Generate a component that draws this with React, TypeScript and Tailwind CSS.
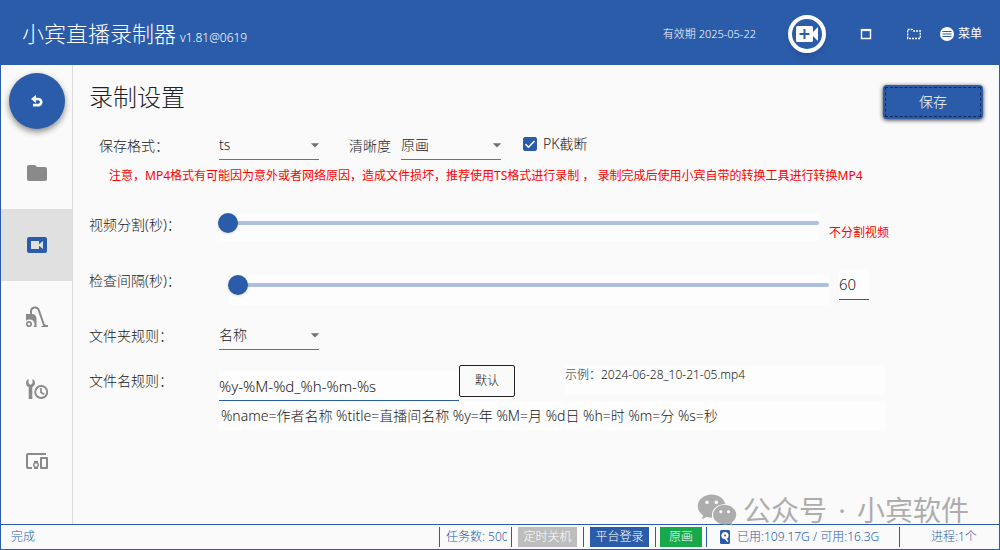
import { useState } from 'react';
import type { ReactNode, SelectHTMLAttributes } from 'react';
import { AiFillWechat } from 'react-icons/ai';
import { MdArrowDropDown, MdFolder, MdDevicesOther } from 'react-icons/md';
import clsx from 'clsx';

const WARNING =
  '注意，MP4格式有可能因为意外或者网络原因，造成文件损坏，推荐使用TS格式进行录制 ， 录制完成后使用小宾自带的转换工具进行转换MP4';
const TOKENS = '%name=作者名称 %title=直播间名称 %y=年 %M=月 %d日 %h=时 %m=分 %s=秒';
const DEFAULT_RULE = '%y-%M-%d_%h-%m-%s';

function VideoBoxIcon() {
  return (
    <svg viewBox="0 0 24 24" className="size-6" fill="currentColor">
      <path d="M18 16l-4-3.2V16H6V8h8v3.2L18 8v8zM20 4H4a2 2 0 0 0-2 2v12a2 2 0 0 0 2 2h16a2 2 0 0 0 2-2V6a2 2 0 0 0-2-2z" />
    </svg>
  );
}

function VacuumIcon() {
  return (
    <svg viewBox="0 0 24 24" className="size-6" fill="none" stroke="currentColor">
      <path d="M6 9V6.500a4 4 0 0 1 7.800-1.200L19.300 21" strokeWidth="2" />
      <path d="M15.500 22h7.500v-1.800l-3-.7z" fill="currentColor" stroke="none" />
      <path
        d="M1 9h6c3 0 4.500 2 4.500 5v8H8.300a4.500 4.500 0 0 0-4.300-7.400c-1.200 0-2.200.5-3 1.200z"
        fill="currentColor"
        stroke="none"
      />
      <circle cx="4" cy="19" r="2.200" strokeWidth="1.700" />
    </svg>
  );
}

function WrenchClockIcon() {
  return (
    <svg viewBox="0 0 24 24" className="size-6" fill="currentColor">
      <path d="M3.500 2v4.200L5.500 8l2-1.800V2C9 2.700 10 4.300 10 6c0 1.900-1.100 3.400-2.700 4.100V22H3.700V10.100A4.400 4.400 0 0 1 1 6c0-1.700 1-3.300 2.500-4z" />
      <circle cx="16.200" cy="15" r="6" fill="none" stroke="currentColor" strokeWidth="1.900" />
      <path d="M16 11v4.500l3.300 1.800" fill="none" stroke="currentColor" strokeWidth="1.700" />
    </svg>
  );
}

function BackIcon() {
  return (
    <svg viewBox="0 0 12 12" className="size-3" fill="none" stroke="currentColor">
      <path d="M3 4h4.200a3 3 0 0 1 0 6.100H2" strokeWidth="2.600" />
      <path d="M0 4L5 0v8z" fill="currentColor" stroke="none" />
    </svg>
  );
}

function AddVideoIcon() {
  return (
    <svg viewBox="0 0 24 18" className="h-[18px] w-6" fill="currentColor">
      <path
        fillRule="evenodd"
        d="M2.500 1h14A1.500 1.500 0 0 1 18 2.500v4.500l5-5v14l-5-5v4.500a1.500 1.500 0 0 1-1.500 1.500h-14A1.500 1.500 0 0 1 1 15.500v-13A1.500 1.500 0 0 1 2.500 1zM8.500 4v4h-4v2h4v4h2v-4h4V8h-4V4z"
      />
    </svg>
  );
}

function WindowIcon() {
  return (
    <svg viewBox="0 0 12 12" className="size-3" fill="none" stroke="currentColor">
      <path d="M1.500 2v8.500h9V2" strokeWidth="1.400" />
      <path d="M.8 2h10.400" strokeWidth="2.200" />
    </svg>
  );
}

function DashedFolderIcon() {
  return (
    <svg viewBox="0 0 14 12" className="h-3 w-3.5" fill="none" stroke="currentColor">
      <path d="M.7 10.500V1.500h4.500l1.500 1.500h6.600v7.500z" strokeWidth="1.300" strokeDasharray="2 1" />
    </svg>
  );
}

function MenuIcon() {
  return (
    <svg viewBox="0 0 14 14" className="size-3.5">
      <circle cx="7" cy="7" r="7" fill="#fff" />
      <path d="M2.500 4.500h9M2.500 7h9M2.500 9.500h9" stroke="#2a5caa" strokeWidth="1.200" />
    </svg>
  );
}

function DiskIcon() {
  return (
    <svg viewBox="0 0 12 14" className="h-3.5 w-3">
      <rect x="1" y="0" width="10" height="14" rx="1.500" fill="#2a5caa" />
      <circle cx="6" cy="5.500" r="3.600" fill="#fafafa" />
      <circle cx="6" cy="5.500" r="1" fill="#2a5caa" />
      <path d="M6 8l3 3.500" stroke="#fafafa" strokeWidth="1.500" />
    </svg>
  );
}

function Select({ className, children, ...rest }: SelectHTMLAttributes<HTMLSelectElement>) {
  return (
    <div className={clsx('relative w-[100px] border-b border-[#707070]', className)}>
      <select {...rest} className="h-7 w-full appearance-none bg-transparent pr-5 outline-none">
        {children}
      </select>
      <MdArrowDropDown size={20} className="pointer-events-none absolute top-1 -right-1.5 text-[#707070]" />
    </div>
  );
}

type SliderProps = { id: string; min: number; max: number; value: number; onChange: (v: number) => void };

function Slider({ id, min, max, value, onChange }: SliderProps) {
  return (
    <input
      id={id}
      type="range"
      min={min}
      max={max}
      value={value}
      onChange={(e) => onChange(Number(e.target.value))}
      className="block h-5 w-full appearance-none bg-transparent outline-none [&::-webkit-slider-runnable-track]:h-1 [&::-webkit-slider-runnable-track]:rounded-full [&::-webkit-slider-runnable-track]:bg-[#adbfde] [&::-webkit-slider-thumb]:-mt-2 [&::-webkit-slider-thumb]:size-5 [&::-webkit-slider-thumb]:appearance-none [&::-webkit-slider-thumb]:rounded-full [&::-webkit-slider-thumb]:bg-[#2a5caa] [&::-webkit-slider-thumb]:shadow"
    />
  );
}

function NavItem({ label, active, children }: { label: string; active?: boolean; children: ReactNode }) {
  return (
    <button
      type="button"
      aria-label={label}
      className={clsx(
        'flex h-[72px] w-full items-center justify-center',
        active ? 'bg-[#e0e0e0] text-[#2a5caa]' : 'text-[#8a8a8a]',
      )}
    >
      {children}
    </button>
  );
}

export default function App() {
  const [format, setFormat] = useState('ts');
  const [quality, setQuality] = useState('原画');
  const [pkCut, setPkCut] = useState(true);
  const [split, setSplit] = useState(0);
  const [interval, setInterval] = useState(60);
  const [folderRule, setFolderRule] = useState('名称');
  const [fileRule, setFileRule] = useState(DEFAULT_RULE);

  return (
    <div
      lang="zh-CN"
      className="flex min-h-screen flex-col bg-[#fafafa] font-['Noto_Sans','Noto_Sans_CJK_SC',sans-serif] text-sm font-light text-[#212121]"
    >
      <header className="flex h-[65px] shrink-0 items-center bg-[#2a5caa] pt-0.5 pr-[18px] pl-[22px] text-white">
        <h1 className="text-[22px] font-light">小宾直播录制器</h1>
        <span className="mt-2 ml-1 text-xs">v1.81@0619</span>
        <span className="ml-auto text-[11px]">有效期 2025-05-22</span>
        <button
          type="button"
          aria-label="添加直播"
          className="ml-8 flex size-[38px] items-center justify-center rounded-full border-4 border-white shadow-md"
        >
          <AddVideoIcon />
        </button>
        <button type="button" aria-label="窗口" className="ml-[34px]">
          <WindowIcon />
        </button>
        <button type="button" aria-label="打开文件夹" className="ml-[35px]">
          <DashedFolderIcon />
        </button>
        <button type="button" className="ml-[19px] flex items-center gap-1 text-xs font-normal">
          <MenuIcon />
          菜单
        </button>
      </header>

      <div className="flex grow border-x border-[#2a5caa]">
        <nav className="w-[72px] shrink-0 border-r border-[#dcdcdc]">
          <div className="flex h-[72px] items-center justify-center">
            <button
              type="button"
              aria-label="返回"
              className="flex size-14 items-center justify-center rounded-full bg-[#2a5caa] text-white shadow-[0_3px_6px_rgba(0,0,0,0.45)]"
            >
              <BackIcon />
            </button>
          </div>
          <NavItem label="文件夹">
            <MdFolder size={24} />
          </NavItem>
          <NavItem label="录制设置" active>
            <VideoBoxIcon />
          </NavItem>
          <NavItem label="清理">
            <VacuumIcon />
          </NavItem>
          <NavItem label="定时工具">
            <WrenchClockIcon />
          </NavItem>
          <NavItem label="设备">
            <MdDevicesOther size={24} />
          </NavItem>
        </nav>

        <main className="relative min-w-0 grow px-4 pt-4">
          <div className="flex items-start justify-between">
            <h2 className="text-2xl font-light">录制设置</h2>
            <button
              type="button"
              className="mt-1 h-[34px] w-[100px] rounded-sm bg-[#2a5caa] p-0.5 text-white shadow-[0_1px_4px_rgba(0,0,0,0.8)]"
            >
              <span className="flex h-full items-center justify-center border border-dashed border-[#14284d]">保存</span>
            </button>
          </div>

          <div className="mt-3 flex items-center">
            <label htmlFor="format" className="w-[130px] pl-2.5">
              保存格式：
            </label>
            <Select id="format" value={format} onChange={(e) => setFormat(e.target.value)}>
              <option>ts</option>
              <option>mp4</option>
            </Select>
            <label htmlFor="quality" className="ml-[30px] w-[52px]">
              清晰度
            </label>
            <Select id="quality" value={quality} onChange={(e) => setQuality(e.target.value)}>
              <option>原画</option>
              <option>超清</option>
            </Select>
            <label className="mb-1 ml-[22px] flex items-center gap-1.5">
              <span className="relative size-3.5">
                <input
                  type="checkbox"
                  checked={pkCut}
                  onChange={(e) => setPkCut(e.target.checked)}
                  className="peer block size-3.5 appearance-none rounded-xs border border-[#2a5caa] checked:bg-[#2a5caa]"
                />
                <svg
                  viewBox="0 0 14 14"
                  className="pointer-events-none absolute inset-0 hidden size-3.5 peer-checked:block"
                  fill="none"
                  stroke="#fff"
                  strokeWidth="1.600"
                >
                  <path d="M2.500 7.200l3 3 6-6.200" />
                </svg>
              </span>
              PK截断
            </label>
          </div>
          <p className="mt-1 pl-5 text-xs leading-6 font-normal text-[#ff0000]">{WARNING}</p>

          <div className="mt-[25px] flex">
            <label htmlFor="split" className="w-[130px] shrink-0 leading-6">
              视频分割(秒)：
            </label>
            <div className="w-full max-w-[600px] bg-[#fdfdfd] pb-2">
              <div className="-ml-px">
                <Slider id="split" min={0} max={3600} value={split} onChange={setSplit} />
              </div>
            </div>
            <span className="ml-2.5 self-end text-xs leading-4 font-normal whitespace-nowrap text-[#ff0000]">
              {split === 0 ? '不分割视频' : `${split}秒`}
            </span>
          </div>

          <div className="mt-7 flex items-start">
            <label htmlFor="interval" className="w-[140px] shrink-0 leading-6">
              检查间隔(秒)：
            </label>
            <div className="mt-1.5 w-full max-w-[600px] bg-[#fdfdfd] pb-2.5">
              <div className="-ml-px">
                <Slider id="interval" min={60} max={3600} value={interval} onChange={setInterval} />
              </div>
            </div>
            <input
              type="text"
              aria-label="检查间隔秒数"
              value={interval}
              onChange={(e) => setInterval(Number(e.target.value) || 0)}
              className="ml-2.5 h-[31px] w-[30px] border-b border-[#2a5caa] bg-[#fdfdfd] text-[15px] outline-none"
            />
          </div>

          <div className="mt-4 flex items-center">
            <label htmlFor="folder-rule" className="w-[130px]">
              文件夹规则：
            </label>
            <Select id="folder-rule" value={folderRule} onChange={(e) => setFolderRule(e.target.value)}>
              <option>名称</option>
              <option>日期</option>
            </Select>
          </div>

          <div className="mt-[15px] flex items-start">
            <label htmlFor="file-rule" className="mt-1 w-[130px] leading-6">
              文件名规则：
            </label>
            <input
              id="file-rule"
              type="text"
              value={fileRule}
              onChange={(e) => setFileRule(e.target.value)}
              className="mt-1.5 h-[30px] w-60 border-b border-[#2a5caa] bg-[#fdfdfd] text-[15px] outline-none"
            />
            <button
              type="button"
              onClick={() => setFileRule(DEFAULT_RULE)}
              className="h-8 w-14 rounded-xs border border-[#212121] text-xs"
            >
              默认
            </button>
            <p className="ml-[50px] h-[30px] w-80 bg-[#fdfdfd] text-xs leading-5">示例：2024-06-28_10-21-05.mp4</p>
          </div>
          <p className="ml-[130px] max-w-[666px] bg-[#fdfdfd] px-0.5 leading-[30px]">{TOKENS}</p>

          {/* watermark */}
          <div className="pointer-events-none absolute right-[30px] -bottom-2 flex items-center gap-1 text-[#adadad]">
            <AiFillWechat size={44} />
            <span className="text-[28px] leading-9 font-normal">
              公众号<span className="px-1"> · </span>小宾软件
            </span>
          </div>
        </main>
      </div>

      <footer className="flex h-[26px] shrink-0 items-center border border-[#2a5caa] text-xs text-[#2a5caa]">
        <span className="grow pl-2.5">完成</span>
        <div className="w-[72px] border-l border-[#2a5caa] pr-1 pl-1.5">
          <span className="block overflow-hidden leading-5 whitespace-nowrap">任务数: 500</span>
        </div>
        <div className="w-[72px] border-l border-[#2a5caa] px-1.5">
          <button type="button" className="block w-full bg-[#bdbdbd] leading-5 text-white">
            定时关机
          </button>
        </div>
        <div className="w-[72px] border-l border-[#2a5caa] px-1.5">
          <button type="button" className="block w-full bg-[#2a5caa] leading-5 text-white">
            平台登录
          </button>
        </div>
        <div className="w-[51px] border-l border-[#2a5caa] px-1">
          <button type="button" className="block w-full bg-[#17a84b] leading-5 text-white">
            原画
          </button>
        </div>
        <div className="flex w-[193px] items-center gap-1.5 border-l border-[#2a5caa] pl-3">
          <DiskIcon />
          <span className="leading-5 whitespace-nowrap">已用:109.17G / 可用:16.3G</span>
        </div>
        <div className="w-[100px] border-l border-[#2a5caa] pl-[31px] leading-5 whitespace-nowrap">进程:1个</div>
      </footer>
    </div>
  );
}
